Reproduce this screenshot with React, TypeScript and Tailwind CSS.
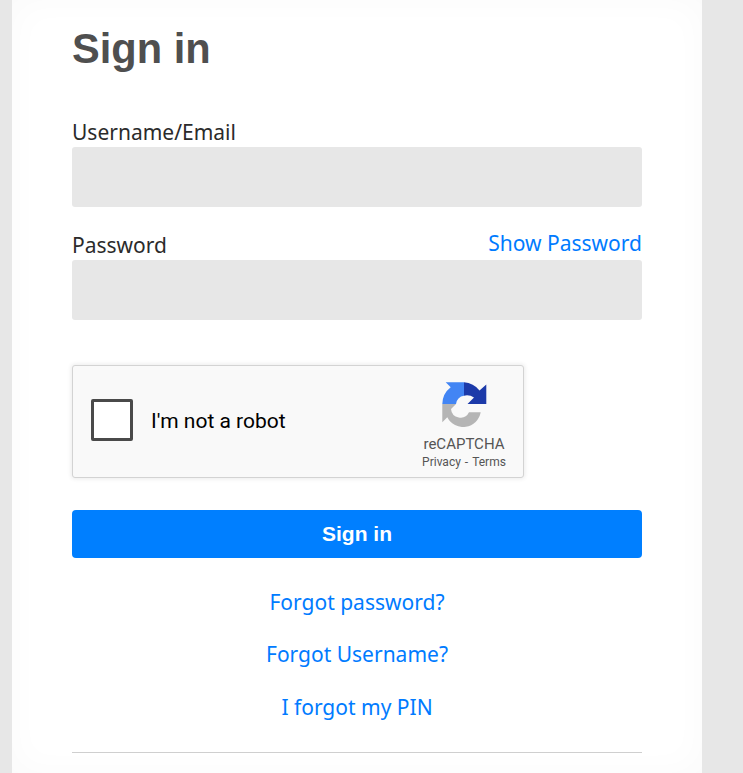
const Field = () => <div className="h-[60px] rounded-[3px] bg-[#e7e7e7]" />;

function RecaptchaLogo() {
  return (
    <svg width="46" height="46" viewBox="0 0 46 46" className="block">
      <path d="M1.300 23H15L10 28A9.500 9.500 0 0 0 28 31.300H39.700A17.800 17.800 0 0 1 6.300 36.300L1.300 41.300Z" fill="#b5b5b5" />
      <path d="M1.300 23A21.700 21.700 0 0 1 9.700 6.300L4.700 1.300H23V14.700A9 9 0 0 0 15 23Z" fill="#4285f4" />
      <path d="M23 1.300A21.700 21.700 0 0 1 38.500 9.500L45.300 3.500V23H26.500L33 16.500A13 13 0 0 0 23 14.700Z" fill="#1c3aa9" />
    </svg>
  );
}

export default function App() {
  return (
    <div className="h-[773px] overflow-hidden bg-[#e7e7e7] pl-3 pr-[41px]">
      <main className="h-full bg-white px-[60px] pt-[18px] shadow-[inset_0_0_36px_rgba(0,0,0,0.025)] font-['Noto_Sans',sans-serif]">
        <h1 className="font-['Liberation_Sans',sans-serif] text-[41.6px] leading-[62px] font-bold text-[#4f4f4f]">Sign in</h1>

        <div className="mt-[37px]">
          <label className="block text-[21px] leading-[30px] text-[#2b2b2b]">Username/Email</label>
          <Field />
        </div>

        <div className="mt-[23px]">
          <div className="flex items-end justify-between">
            <label className="block text-[21px] leading-[30px] text-[#2b2b2b]">Password</label>
            <a className="pb-[3px] text-[21px] leading-[27px] text-[#007bff]">Show Password</a>
          </div>
          <Field />
        </div>

        <div className="mt-[45px] flex h-[113px] w-[452px] items-center rounded-[3px] border border-[#d3d3d3] bg-[#f9f9f9] shadow-[0_0_4px_1px_rgba(0,0,0,0.08)]">
          <div className="mb-[3px] ml-[18px] size-[42px] rounded-[2px] border-[3px] border-[#4a4a4a] bg-white" />
          <span className="ml-[18px] pt-[1px] font-['Roboto',sans-serif] text-[21px] text-black">I'm not a robot</span>
          <div className="ml-auto mr-4 flex w-[86px] flex-col items-center pt-[6px] font-['Roboto',sans-serif] text-[#555]">
            <RecaptchaLogo />
            <span className="mt-[8px] text-[15px] leading-[18px]">reCAPTCHA</span>
            <span className="mt-[2px] flex gap-[4px] text-[12px] leading-[14px]">
              <span>Privacy</span>
              <span>-</span>
              <span>Terms</span>
            </span>
          </div>
        </div>

        <button className="mt-[32px] block h-12 w-full rounded-[4px] bg-[#007fff] font-['Liberation_Sans',sans-serif] text-[21px] font-bold text-white">Sign in</button>

        <div className="mt-[30px] flex flex-col items-center text-[21px] leading-[28px] text-[#007bff]">
          <a>Forgot password?</a>
          <a className="mt-[24px]">Forgot Username?</a>
          <a className="mt-[25px]">I forgot my PIN</a>
        </div>

        <hr className="mt-[31px] border-[#cfcfcf]" />
      </main>
    </div>
  );
}
